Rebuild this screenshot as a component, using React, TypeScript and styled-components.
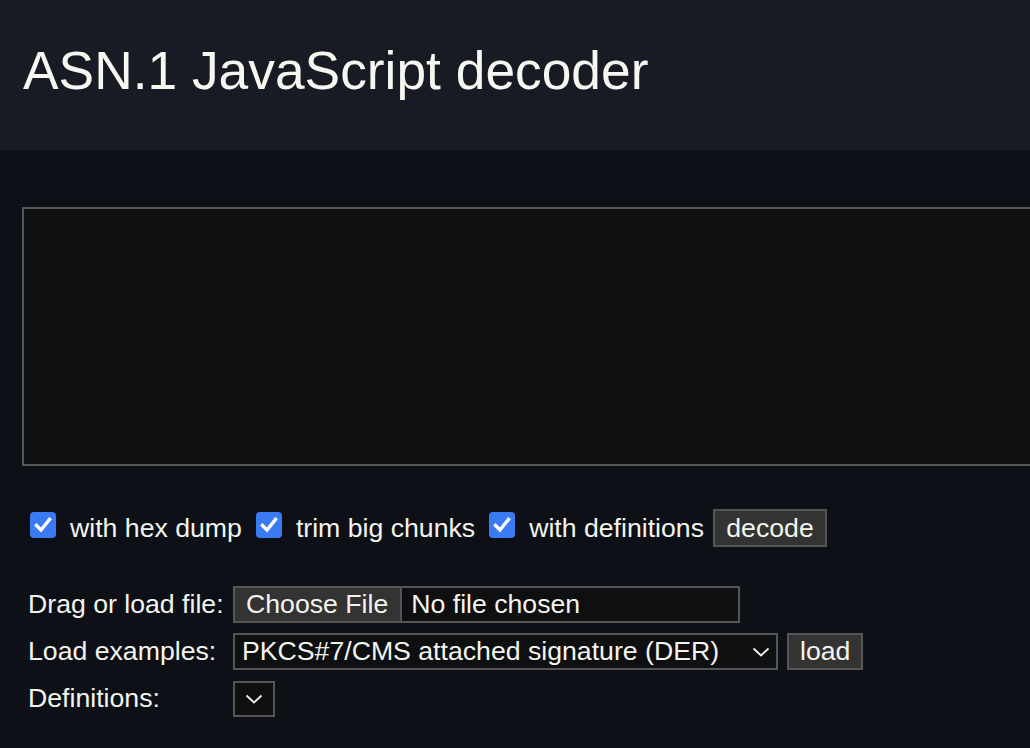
import React from 'react';
import styled, { createGlobalStyle } from 'styled-components';

const GlobalStyle = createGlobalStyle`
  html, body {
    margin: 0;
    padding: 0;
    background: #0d1117;
    overflow: hidden;
  }
  body {
    font-family: "Liberation Sans", Arial, sans-serif;
    font-size: 26.67px;
    color: #f4f4ee;
  }
`;

const Header = styled.header`
  height: 150px;
  box-sizing: border-box;
  background: #181b23;
  padding: 40px 0 0 23px;
`;

const Title = styled.h1`
  margin: 0;
  font-size: 53.33px;
  font-weight: normal;
  line-height: 61px;
  color: #f7f7f1;
`;

const Main = styled.main`
  padding: 57px 0 0 22px;
`;

const Editor = styled.textarea`
  display: block;
  box-sizing: border-box;
  width: 1100px;
  height: 259px;
  margin: 0;
  background: #0e0f10;
  border: 2px solid #555;
  resize: none;
  outline: none;
  color: #f4f4ee;
  font-family: "Liberation Mono", monospace;
  font-size: 22px;
`;

const Options = styled.div`
  display: flex;
  align-items: center;
  height: 38px;
  margin-top: 43px;
  padding-left: 8px;
`;

const CheckOption = styled.label`
  display: flex;
  align-items: center;
  gap: 14px;
  margin-right: 14px;
  line-height: 38px;
  cursor: pointer;
`;

const CheckBox = styled.span`
  display: flex;
  align-items: center;
  justify-content: center;
  width: 26px;
  height: 26px;
  margin-bottom: 7px;
  border-radius: 4px;
  background: #3a7bf3;
`;

const Button = styled.button<{ $width?: number }>`
  box-sizing: border-box;
  height: ${({ $width }) => ($width ? '37px' : '38px')};
  padding: 0 11px;
  margin: 0;
  background: #333;
  border: 2px solid #555;
  color: #f4f4ee;
  font-family: inherit;
  font-size: 26.67px;
  line-height: 1;
  cursor: pointer;
`;

const DecodeButton = styled(Button)`
  margin-left: -5px;
  width: 114px;
`;

const Form = styled.div`
  display: grid;
  grid-template-columns: 205px auto;
  row-gap: 10px;
  margin-top: 39px;
  padding-left: 6px;
  align-items: center;
`;

const Label = styled.span`
  line-height: 37px;
  white-space: nowrap;
`;

const Field = styled.div`
  display: flex;
  align-items: center;
  gap: 9px;
`;

const FileBox = styled.div`
  display: flex;
  box-sizing: border-box;
  width: 507px;
  height: 37px;
  border: 2px solid #555;
  background: #0e0f10;
`;

const FileButton = styled.span`
  display: flex;
  align-items: center;
  padding: 0 12px 0 11px;
  background: #333;
  border-right: 2px solid #555;
`;

const FileName = styled.span`
  display: flex;
  align-items: center;
  padding-left: 9px;
`;

const SelectBox = styled.div<{ $width: number }>`
  display: flex;
  align-items: center;
  justify-content: space-between;
  box-sizing: border-box;
  width: ${({ $width }) => $width}px;
  height: 37px;
  padding: 0 6px 0 7px;
  border: 2px solid #555;
  background: #0e0f10;
  white-space: nowrap;
`;

const EmptySelect = styled(SelectBox)`
  height: 36px;
  justify-content: center;
  padding: 0;
`;

const Check = () => (
  <svg width="20" height="20" viewBox="0 0 20 20">
    <path d="M3.5 10.5 L8 15 L16.5 4.5" fill="none" stroke="#fff" strokeWidth="3.4" strokeLinecap="square" />
  </svg>
);

const Chevron = () => (
  <svg width="18" height="10" viewBox="0 0 18 10">
    <path d="M1.5 1.5 L9 8.5 L16.5 1.5" fill="none" stroke="#f4f4ee" strokeWidth="1.8" />
  </svg>
);

export default function App() {
  return (
    <>
      <GlobalStyle />
      <Header>
        <Title>ASN.1 JavaScript decoder</Title>
      </Header>
      <Main>
        <Editor spellCheck={false} />
        <Options>
          <CheckOption>
            <CheckBox><Check /></CheckBox>
            with hex dump
          </CheckOption>
          <CheckOption>
            <CheckBox><Check /></CheckBox>
            trim big chunks
          </CheckOption>
          <CheckOption>
            <CheckBox><Check /></CheckBox>
            with definitions
          </CheckOption>
          <DecodeButton>decode</DecodeButton>
        </Options>
        <Form>
          <Label>Drag or load file:</Label>
          <Field>
            <FileBox>
              <FileButton>Choose File</FileButton>
              <FileName>No file chosen</FileName>
            </FileBox>
          </Field>
          <Label>Load examples:</Label>
          <Field>
            <SelectBox $width={545}>
              PKCS#7/CMS attached signature (DER)
              <Chevron />
            </SelectBox>
            <Button $width={75}>load</Button>
          </Field>
          <Label>Definitions:</Label>
          <Field>
            <EmptySelect $width={42}>
              <Chevron />
            </EmptySelect>
          </Field>
        </Form>
      </Main>
    </>
  );
}
